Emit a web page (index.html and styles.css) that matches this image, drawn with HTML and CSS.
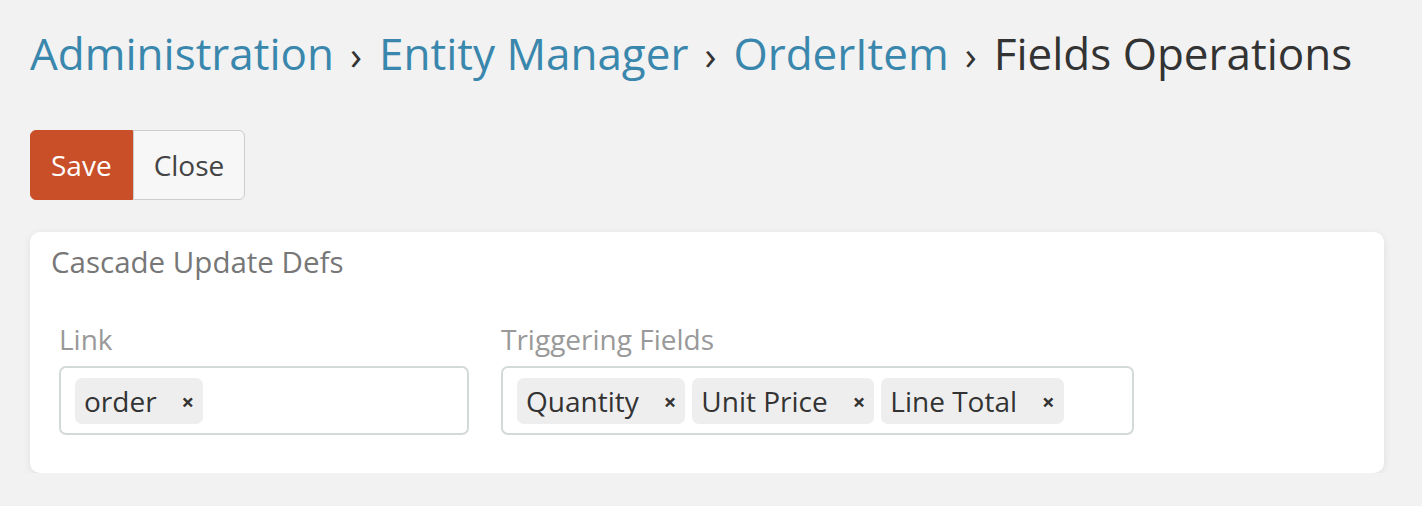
FILE: index.html
```html
<!DOCTYPE html>
<html>
<head>
<meta charset="utf-8">
<link rel="stylesheet" href="styles.css">
</head>
<body>
<div class="page">
  <div class="breadcrumb">
    <a class="crumb">Administration</a><span class="sep">›</span><a class="crumb">Entity Manager</a><span class="sep">›</span><a class="crumb">OrderItem</a><span class="sep">›</span><span class="current">Fields Operations</span>
  </div>
  <div class="btn-group">
    <button class="btn btn-danger">Save</button><button class="btn btn-default">Close</button>
  </div>
  <div class="panel">
    <div class="panel-title">Cascade Update Defs</div>
    <div class="row">
      <div class="cell cell-link">
        <div class="label">Link</div>
        <div class="input">
          <span class="chip">order<span class="x">×</span></span>
        </div>
      </div>
      <div class="cell cell-fields">
        <div class="label">Triggering Fields</div>
        <div class="input">
          <span class="chip">Quantity<span class="x">×</span></span>
          <span class="chip">Unit Price<span class="x">×</span></span>
          <span class="chip">Line Total<span class="x">×</span></span>
        </div>
      </div>
    </div>
  </div>
</div>
</body>
</html>
```
FILE: styles.css
```css
html, body {
  margin: 0;
  padding: 0;
  background: #f2f2f2;
  font-family: "Open Sans", "Liberation Sans", sans-serif;
}
.page {
  padding: 23px 38px 0 30px;
}
.breadcrumb {
  font-size: 44px;
  line-height: 60px;
  color: #333;
  white-space: nowrap;
}
.crumb {
  color: #3a87ad;
}
.sep {
  margin: 0 17px 0 16px;
  font-size: 40px;
  color: #333;
}
.btn-group {
  display: flex;
  margin-top: 45px;
}
.btn {
  font-family: inherit;
  font-size: 28px;
  height: 70px;
  padding: 0 20px;
  border: 1px solid;
  margin: 0;
}
.btn-danger {
  background: #c94f29;
  border-color: #c94f29;
  color: #fff;
  border-radius: 6px 0 0 6px;
}
.btn-default {
  background: #f7f7f7;
  border-color: #cccccc;
  color: #444;
  border-radius: 0 6px 6px 0;
}
.panel {
  margin-top: 32px;
  background: #fff;
  border-radius: 10px;
  box-shadow: 0 2px 8px rgba(0,0,0,0.08);
  height: 241px;
  box-sizing: border-box;
  padding: 10px 21px;
}
.panel-title {
  font-size: 29.5px;
  line-height: 40px;
  color: #777;
}
.row {
  display: flex;
  gap: 32px;
  margin-top: 38px;
  padding-left: 8px;
}
.label {
  font-size: 28px;
  line-height: 38px;
  color: #999;
}
.input {
  margin-top: 8px;
  height: 69px;
  box-sizing: border-box;
  border: 2px solid #d4d9d9;
  border-radius: 7px;
  display: flex;
  align-items: center;
  gap: 7px;
  padding: 0 14px;
}
.cell-link .input { width: 410px; }
.cell-fields .input { width: 633px; }
.chip {
  display: inline-flex;
  align-items: center;
  background: #eeeeee;
  border-radius: 7px;
  height: 46px;
  padding: 0 9px;
  font-size: 28px;
  color: #333;
}
.x {
  font-size: 22px;
  font-weight: bold;
  margin-left: 25px;
  color: #333;
}
```
